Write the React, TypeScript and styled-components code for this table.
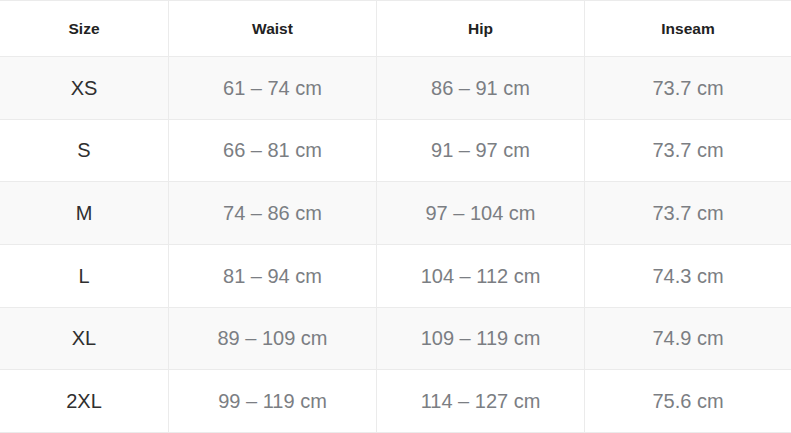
import React from "react";
import styled, { createGlobalStyle } from "styled-components";

const Global = createGlobalStyle`
  html, body { margin: 0; padding: 0; background: #ffffff; }
  body { font-family: "Liberation Sans", Arial, sans-serif; }
`;

const Table = styled.div`
  display: grid;
  grid-template-columns: 169px 208px 208px 1fr;
  width: 791px;
  border-top: 1px solid #ebebeb;
`;

const Cell = styled.div<{ $head?: boolean; $shade?: boolean; $last?: boolean; $kind?: "size" | "val" }>`
  display: flex;
  align-items: center;
  justify-content: center;
  box-sizing: border-box;
  height: ${(p) => (p.$head ? "56px" : "62.67px")};
  background: ${(p) => (p.$shade ? "#f9f9f9" : "#ffffff")};
  border-bottom: 1px solid #ebebeb;
  border-right: ${(p) => (p.$last ? "none" : "1px solid #ebebeb")};
  font-size: ${(p) => (p.$head ? "15.5px" : "20px")};
  font-weight: ${(p) => (p.$head ? 700 : 400)};
  color: ${(p) => (p.$head ? "#222222" : p.$kind === "size" ? "#2f2f2f" : "#7b7e83")};
  padding-top: ${(p) => (p.$head ? "0" : "1px")};
`;

const headers = ["Size", "Waist", "Hip", "Inseam"];
const rows = [
  ["XS", "61 – 74 cm", "86 – 91 cm", "73.7 cm"],
  ["S", "66 – 81 cm", "91 – 97 cm", "73.7 cm"],
  ["M", "74 – 86 cm", "97 – 104 cm", "73.7 cm"],
  ["L", "81 – 94 cm", "104 – 112 cm", "74.3 cm"],
  ["XL", "89 – 109 cm", "109 – 119 cm", "74.9 cm"],
  ["2XL", "99 – 119 cm", "114 – 127 cm", "75.6 cm"],
];

export default function App() {
  return (
    <>
      <Global />
      <Table>
        {headers.map((h, i) => (
          <Cell key={h} $head $last={i === 3}>
            {h}
          </Cell>
        ))}
        {rows.map((r, ri) =>
          r.map((c, ci) => (
            <Cell
              key={`${ri}-${ci}`}
              $shade={ri % 2 === 0}
              $last={ci === 3}
              $kind={ci === 0 ? "size" : "val"}
            >
              {c}
            </Cell>
          ))
        )}
      </Table>
    </>
  );
}
